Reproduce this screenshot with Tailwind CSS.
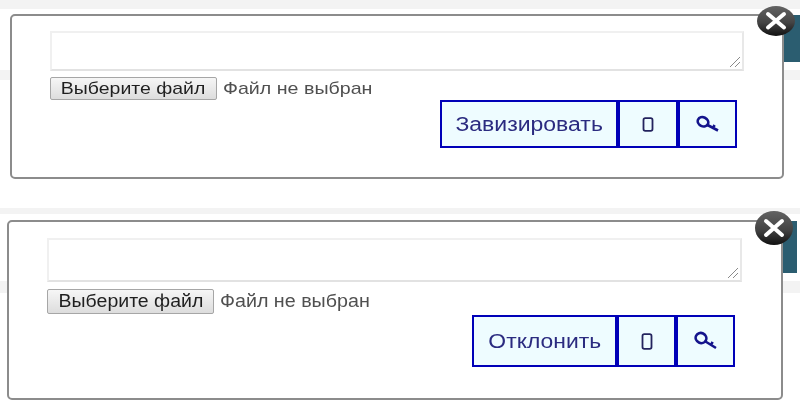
<!DOCTYPE html>
<html lang="ru">
<head>
<meta charset="utf-8">
<script src="https://cdn.jsdelivr.net/npm/@tailwindcss/browser@4"></script>
<title>Диалоги</title>
</head>
<body class="bg-white overflow-hidden font-['Liberation_Sans',Arial,sans-serif]">
<div class="w-[800px] h-[408px] flex flex-col overflow-hidden blur-[0.5px]">

  <!-- Section 1 -->
  <section class="relative h-[208px] shrink-0 pt-[14px] pl-[10px]">
    <div class="absolute left-0 top-0 w-full h-[9px] bg-[#f3f3f3]"></div>
    <div class="absolute left-0 top-[70px] w-[12px] h-[10px] bg-[#f3f3f3]"></div>
    <div class="absolute right-0 top-[70px] w-[18px] h-[10px] bg-[#f3f3f3]"></div>
    <div class="absolute right-0 top-[15px] w-[18px] h-[47px] bg-[#2b5d70]"></div>

    <div class="relative w-[774px] h-[165px] bg-white border-2 border-[#8c8c8c] rounded-[5px] pl-[38px] pt-[15px]">
      <div class="relative w-[694px] h-[40px] bg-white border-2 border-[#f0f0f0] border-b-[#e2e2e2] border-r-[#e8e8e8]">
        <svg class="absolute right-[1px] bottom-[1px]" width="12" height="12" viewBox="0 0 12 12" fill="none" stroke="#8a8a8a" stroke-width="1"><path d="M1 11 11 1M6 11l5-5"/></svg>
      </div>
      <div class="flex items-center h-[23px] mt-[6px]">
        <div class="w-[167px] h-[23px] flex items-center justify-center rounded-[2px] border border-[#a6a6a6] bg-linear-to-b from-[#f6f6f6] to-[#dddddd] text-[#1f1f1f]">
          <span class="inline-block text-[17px] scale-x-[1.145]">Выберите файл</span>
        </div>
        <span class="inline-block ml-[6px] text-[17px] text-[#505050] origin-left scale-x-[1.155]">Файл не выбран</span>
      </div>
      <div class="absolute left-[428px] top-[84px] flex w-[297px] h-[48px] border-2 border-[#0000b8] bg-[#eefcff] text-[#2b2b80]">
        <div class="w-[174px] flex items-center justify-center">
          <span class="inline-block text-[20px] scale-x-[1.15]">Завизировать</span>
        </div>
        <div class="w-[60px] flex items-center justify-center border-l-[4px] border-[#0000b8]">
          <svg width="12" height="15" viewBox="0 0 12 15" fill="none" stroke="#23235e" stroke-width="1.8"><rect x="1.5" y="1.2" width="9" height="12.6" rx="1.8"/></svg>
        </div>
        <div class="flex-1 flex items-center justify-center border-l-[4px] border-[#0000b8]">
          <svg width="24" height="18" viewBox="0 0 24 18" fill="none" stroke="#14148c" stroke-width="2.6"><ellipse cx="7" cy="6.8" rx="5.4" ry="4.5" transform="rotate(25 7 6.8)"/><path d="M11.5 10 22 15.5M17 12.8l1.6-2.8"/></svg>
        </div>
      </div>
    </div>

    <svg class="absolute left-[757px] top-[6px]" width="38" height="30" viewBox="0 0 38 30">
      <defs><linearGradient id="g1" x1="0" y1="0" x2="0" y2="1"><stop offset="0" stop-color="#636363"/><stop offset=".55" stop-color="#444"/><stop offset="1" stop-color="#111"/></linearGradient></defs>
      <ellipse cx="19" cy="15" rx="19" ry="15" fill="url(#g1)"/>
      <path d="M11 8 27 21.5M27 8 11 21.5" stroke="#fff" stroke-width="4" stroke-linecap="round"/>
    </svg>
  </section>

  <!-- Section 2 -->
  <section class="relative h-[200px] shrink-0 pt-[12px] pl-[7px]">
    <div class="absolute left-0 top-0 w-full h-[6px] bg-[#f3f3f3]"></div>
    <div class="absolute left-0 top-[73px] w-[10px] h-[12px] bg-[#f3f3f3]"></div>
    <div class="absolute right-0 top-[73px] w-[18px] h-[12px] bg-[#f3f3f3]"></div>
    <div class="absolute right-[3px] top-[13px] w-[15px] h-[52px] bg-[#2b5d70]"></div>

    <div class="relative w-[776px] h-[180px] bg-white border-2 border-[#8c8c8c] rounded-[5px] pl-[38px] pt-[16px]">
      <div class="relative w-[695px] h-[44px] bg-white border-2 border-[#f0f0f0] border-b-[#e2e2e2] border-r-[#e8e8e8]">
        <svg class="absolute right-[1px] bottom-[1px]" width="12" height="12" viewBox="0 0 12 12" fill="none" stroke="#8a8a8a" stroke-width="1"><path d="M1 11 11 1M6 11l5-5"/></svg>
      </div>
      <div class="flex items-center h-[25px] mt-[7px]">
        <div class="w-[167px] h-[25px] flex items-center justify-center rounded-[2px] border border-[#a6a6a6] bg-linear-to-b from-[#f6f6f6] to-[#dddddd] text-[#1f1f1f]">
          <span class="inline-block text-[17.5px] scale-x-[1.115]">Выберите файл</span>
        </div>
        <span class="inline-block ml-[6px] text-[17.5px] text-[#505050] origin-left scale-x-[1.125]">Файл не выбран</span>
      </div>
      <div class="absolute left-[463px] top-[93px] flex w-[263px] h-[52px] border-2 border-[#0000b8] bg-[#eefcff] text-[#2b2b80]">
        <div class="w-[141px] flex items-center justify-center">
          <span class="inline-block text-[21px] scale-x-[1.09]">Отклонить</span>
        </div>
        <div class="w-[59px] flex items-center justify-center border-l-[4px] border-[#0000b8]">
          <svg width="12" height="17" viewBox="0 0 12 17" fill="none" stroke="#23235e" stroke-width="1.8"><rect x="1.5" y="1.2" width="9" height="14.6" rx="1.8"/></svg>
        </div>
        <div class="flex-1 flex items-center justify-center border-l-[4px] border-[#0000b8]">
          <svg width="24" height="20" viewBox="0 0 24 20" fill="none" stroke="#14148c" stroke-width="2.6"><ellipse cx="7" cy="7" rx="5.4" ry="5" transform="rotate(25 7 7)"/><path d="M11.5 10.5 22 17M17 14l1.6-3.2"/></svg>
        </div>
      </div>
    </div>

    <svg class="absolute left-[755px] top-[3px]" width="38" height="34" viewBox="0 0 38 34">
      <defs><linearGradient id="g2" x1="0" y1="0" x2="0" y2="1"><stop offset="0" stop-color="#636363"/><stop offset=".55" stop-color="#444"/><stop offset="1" stop-color="#111"/></linearGradient></defs>
      <ellipse cx="19" cy="17" rx="19" ry="17" fill="url(#g2)"/>
      <path d="M11 10 27 24M27 10 11 24" stroke="#fff" stroke-width="4" stroke-linecap="round"/>
    </svg>
  </section>
</div>
</body>
</html>
